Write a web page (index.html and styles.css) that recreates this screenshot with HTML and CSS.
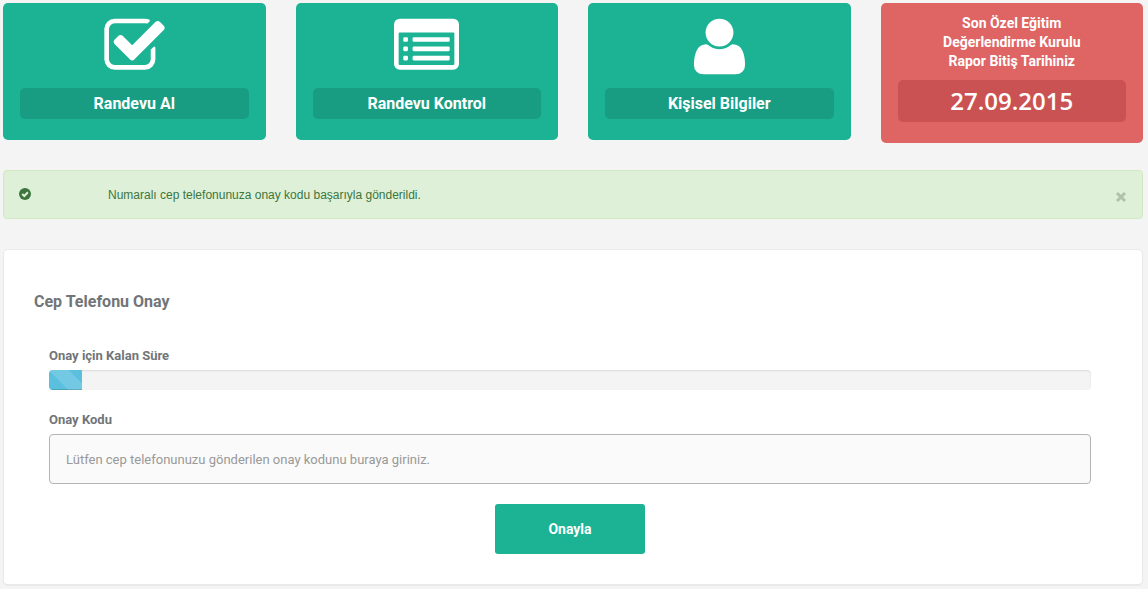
FILE: index.html
```
<!DOCTYPE html>
<html lang="tr">
<head>
<meta charset="utf-8">
<meta name="viewport" content="width=device-width, initial-scale=1">
<title>Cep Telefonu Onay</title>
<link rel="stylesheet" href="styles.css">
</head>
<body>
<main class="page">
  <nav class="tiles">
    <a class="tile" href="#">
      <svg class="tile-icon" viewBox="0 0 1792 1792" aria-hidden="true"><path d="M1472 930v318q0 119-84.500 203.500t-203.500 84.500h-832q-119 0-203.500-84.500t-84.500-203.500v-832q0-119 84.500-203.500t203.500-84.500h832q63 0 117 25 15 7 18 23 3 17-9 29l-49 49q-10 10-23 10-3 0-9-2-23-6-45-6h-832q-66 0-113 47t-47 113v832q0 66 47 113t113 47h832q66 0 113-47t47-113v-254q0-13 9-22l64-64q10-10 23-10 6 0 12 3 20 8 20 29zm231-489l-814 814q-24 24-57 24t-57-24l-430-430q-24-24-24-57t24-57l110-110q24-24 57-24t57 24l263 263 647-647q24-24 57-24t57 24l110 110q24 24 24 57t-24 57z"/></svg>
      <span class="tile-label">Randevu Al</span>
    </a>
    <a class="tile" href="#">
      <svg class="tile-icon" viewBox="0 0 1792 1792" aria-hidden="true">
        <path fill-rule="evenodd" d="M160 128h1472q66 0 113 47t47 113v1088q0 66-47 113t-113 47H160q-66 0-113-47T0 1376V288q0-66 47-113t113-47zM160 512q-32 0-32 32v832q0 32 32 32h1472q32 0 32-32V544q0-32-32-32z"/>
        <rect x="256" y="640" width="128" height="128" rx="32"/><rect x="512" y="640" width="1024" height="128" rx="32"/>
        <rect x="256" y="896" width="128" height="128" rx="32"/><rect x="512" y="896" width="1024" height="128" rx="32"/>
        <rect x="256" y="1152" width="128" height="128" rx="32"/><rect x="512" y="1152" width="1024" height="128" rx="32"/>
      </svg>
      <span class="tile-label">Randevu Kontrol</span>
    </a>
    <a class="tile" href="#">
      <svg class="tile-icon" viewBox="0 0 1792 1792" aria-hidden="true"><circle cx="896" cy="512" r="384"/><path d="M1600 1405q0 120-73 189.500t-194 69.500H459q-121 0-194-69.500T192 1405q0-53 3.500-103.500t14-109T236 1084t43-97.500 62-81 85.500-53.500T538 832q9 0 42 21.500t74.500 48 108 48T896 971t133.500-21.500 108-48 74.500-48 42-21.500q61 0 111.500 20t85.500 53.500 62 81 43 97.500 26.500 108.500 14 109 3.500 103.500z"/></svg>
      <span class="tile-label">Kişisel Bilgiler</span>
    </a>
    <div class="tile tile-red">
      <p class="tile-text">Son Özel Eğitim<br>Değerlendirme Kurulu<br>Rapor Bitiş Tarihiniz</p>
      <time class="tile-date" datetime="2015-09-27">27.09.2015</time>
    </div>
  </nav>

  <div class="alert" role="status">
    <svg class="alert-icon" viewBox="0 0 12 12" aria-hidden="true"><circle cx="6" cy="6" r="6" fill="#3c763d"/><path d="M3.200 6 5.300 8 8.900 4.300" fill="none" stroke="#dff0d8" stroke-width="2"/></svg>
    <span class="alert-text">Numaralı cep telefonunuza onay kodu başarıyla gönderildi.</span>
    <button class="close" type="button" aria-label="Kapat"><svg class="close-icon" viewBox="0 0 12 12" aria-hidden="true"><path d="M2 2 10 10M10 2 2 10"/></svg></button>
  </div>

  <section class="panel">
    <h1 class="panel-title">Cep Telefonu Onay</h1>
    <form class="form">
      <div class="label" id="time-label">Onay için Kalan Süre</div>
      <div class="progress" role="progressbar" aria-labelledby="time-label" aria-valuenow="3" aria-valuemin="0" aria-valuemax="100"><div class="progress-bar" style="width:3.2%"></div></div>
      <label class="label" for="code">Onay Kodu</label>
      <input class="input" id="code" type="text" placeholder="Lütfen cep telefonunuzu gönderilen onay kodunu buraya giriniz.">
      <button class="submit" type="submit">Onayla</button>
    </form>
  </section>
</main>
</body>
</html>
```
FILE: styles.css
```
* { box-sizing: border-box; }
body {
  margin: 0;
  background: #f4f4f4;
  color: #717578;
  font-family: Roboto, "Noto Sans", sans-serif;
  font-size: 13px;
}
.page { padding: 3px 5px 4px 3px; }
.tiles {
  display: grid;
  grid-template-columns: repeat(4, 1fr);
  gap: 30px;
  align-items: start;
}
.tile {
  display: flex;
  flex-direction: column;
  align-items: center;
  padding: 11px 17px 21px;
  border-radius: 5px;
  background: #1cb394;
  color: #fff;
  text-align: center;
  text-decoration: none;
}
.tile-icon { width: 65px; height: 65px; margin-bottom: 9px; fill: #fff; }
.tile-label {
  width: 100%;
  border-radius: 5px;
  background: #199d82;
  font-size: 16px;
  font-weight: 700;
  line-height: 31px;
}
.tile-red { background: #df6464; }
.tile-text {
  margin: 0 0 9px;
  font-size: 14px;
  font-weight: 700;
  line-height: 19px;
}
.tile-date {
  width: 100%;
  border-radius: 5px;
  background: #cb5252;
  font-family: "Open Sans", sans-serif;
  font-size: 24px;
  font-weight: 600;
  line-height: 42px;
}
.alert {
  display: flex;
  align-items: center;
  min-height: 49px;
  margin: 27px 0 30px;
  padding: 0 15px;
  border: 1px solid #d0e9c0;
  border-radius: 4px;
  background: #dff0d8;
  color: #3c763d;
  font-family: "Liberation Sans", Arial, sans-serif;
  font-size: 12px;
}
.alert-icon { width: 12px; height: 12px; margin: 0 77px 2px 0; }
.alert-text { flex: 1; }
.close { display: flex; padding: 4px 0 0; border: 0; background: none; cursor: pointer; }
.close-icon { width: 12px; height: 12px; fill: none; stroke: #b0c3aa; stroke-width: 3; }
.panel {
  padding: 40px 30px 30px;
  border: 1px solid #e7e9ea;
  border-bottom-width: 2px;
  border-radius: 5px;
  background: #fff;
}
.panel-title {
  margin: 0;
  font-size: 16px;
  font-weight: 700;
  line-height: 24px;
}
.form { display: flex; flex-direction: column; margin: 32px 21px 0 15px; }
.label {
  font-size: 13px;
  font-weight: 700;
  line-height: 20px;
  margin-bottom: 4px;
}
.progress {
  height: 20px;
  margin-bottom: 20px;
  overflow: hidden;
  border-radius: 4px;
  background: #f4f4f4;
  box-shadow: inset 0 1px 2px rgba(0, 0, 0, .1);
}
.progress-bar {
  height: 100%;
  background-color: #5bc0de;
  background-image: linear-gradient(45deg, rgba(255,255,255,.15) 25%, transparent 25%, transparent 50%, rgba(255,255,255,.15) 50%, rgba(255,255,255,.15) 75%, transparent 75%);
  background-size: 40px 40px;
  box-shadow: inset 0 -1px 0 rgba(0, 0, 0, .15);
}
.input {
  width: 100%;
  height: 50px;
  padding: 0 16px;
  border: 1px solid #b2b4b5;
  border-radius: 4px;
  background: #fafafa;
  color: #555;
  font-family: inherit;
  font-size: 13px;
}
.input::placeholder { color: #999; opacity: 1; }
.submit {
  align-self: center;
  width: 150px;
  height: 50px;
  margin-top: 20px;
  border: 0;
  border-radius: 3px;
  background: #1cb394;
  color: #fff;
  font-family: inherit;
  font-size: 14px;
  font-weight: 700;
  cursor: pointer;
}
```
